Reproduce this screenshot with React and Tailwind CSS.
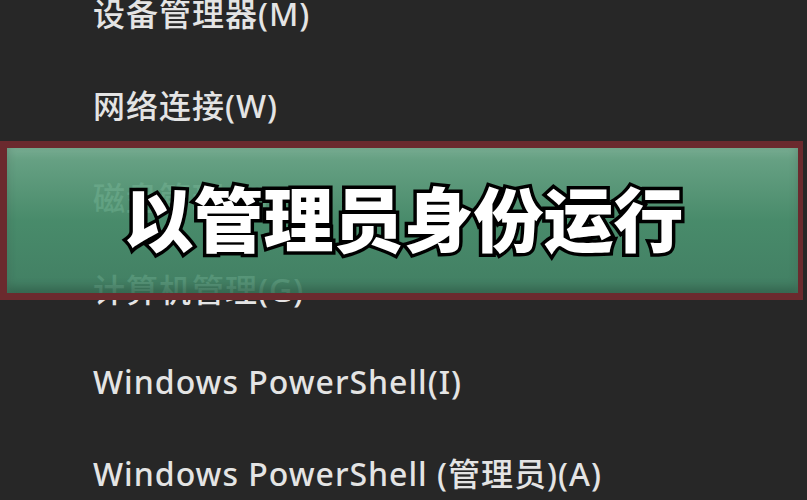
import React from 'react';

const items = [
  '设备管理器(M)',
  '网络连接(W)',
  '磁盘管理(K)',
  '计算机管理(G)',
  'Windows PowerShell(I)',
  'Windows PowerShell (管理员)(A)',
];

export default function App() {
  return (
    <div className="relative w-[807px] h-[500px] overflow-hidden bg-[#272727]">
      {/* menu list */}
      <ul className="mt-[-32px] pl-[93px] font-['Noto_Sans','Noto_Sans_CJK_SC',sans-serif] font-medium text-[32px] tracking-[1px] text-[#e4e4e4]">
        {items.map((label) => (
          <li key={label} className="h-[92px] flex items-center whitespace-nowrap">
            {label}
          </li>
        ))}
      </ul>

      {/* caption banner over the menu */}
      <div className="absolute left-0 top-[141px] w-[803px] h-[159px] border-l-[7px] border-r-[5px] border-y-[7px] border-[#6b2a2e] bg-linear-to-b from-[#6fab8d]/95 via-[#4c9672]/90 to-[#45896a]/90 shadow-[inset_0_-6px_10px_rgba(0,0,0,0.2),inset_0_6px_10px_rgba(255,255,255,0.08)] flex items-center justify-center">
        <span className="mt-[-8px] ml-[2px] font-['Noto_Sans_CJK_SC',sans-serif] font-black text-[70px] leading-none tracking-[0px] text-white [-webkit-text-stroke:7px_#000] [paint-order:stroke_fill]">
          以管理员身份运行
        </span>
      </div>
    </div>
  );
}
